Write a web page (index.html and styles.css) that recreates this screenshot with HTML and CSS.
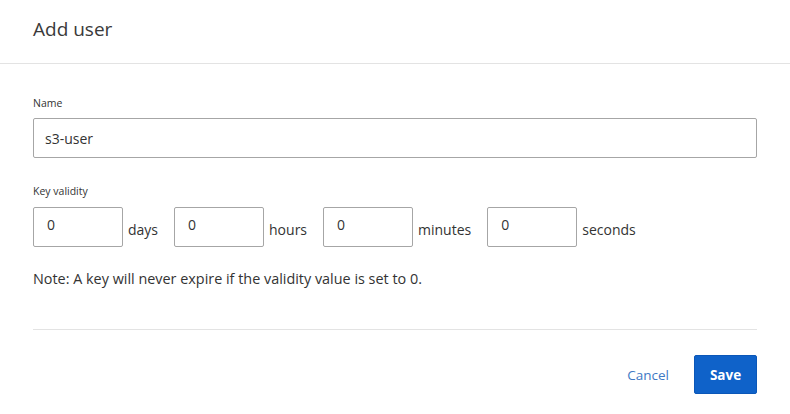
FILE: index.html
```html
<!DOCTYPE html>
<html lang="en">
<head>
<meta charset="utf-8">
<title>Add user</title>
<link rel="stylesheet" href="styles.css">
</head>
<body>
<div class="dialog">
  <header class="dialog-header">
    <h1 class="dialog-title">Add user</h1>
  </header>
  <main class="dialog-body">
    <div class="field">
      <label class="field-label" for="name">Name</label>
      <input class="text-input name-input" id="name" type="text" value="s3-user">
    </div>
    <div class="field field-validity">
      <div class="field-label">Key validity</div>
      <div class="validity-row">
        <input class="text-input num-input" type="text" value="0"><span class="unit">days</span>
        <input class="text-input num-input" type="text" value="0"><span class="unit">hours</span>
        <input class="text-input num-input" type="text" value="0"><span class="unit">minutes</span>
        <input class="text-input num-input" type="text" value="0"><span class="unit">seconds</span>
      </div>
    </div>
    <p class="note">Note: A key will never expire if the validity value is set to 0.</p>
  </main>
  <footer class="dialog-footer">
    <button class="btn btn-link" type="button">Cancel</button>
    <button class="btn btn-primary" type="button">Save</button>
  </footer>
</div>
</body>
</html>
```

FILE: styles.css
```css
* { box-sizing: border-box; }

html, body {
  margin: 0;
  padding: 0;
  background: #ffffff;
}

body {
  font-family: "Open Sans", "Noto Sans", "Liberation Sans", sans-serif;
  color: #333333;
}

.dialog {
  width: 790px;
  height: 414px;
  display: flex;
  flex-direction: column;
}

.dialog-header {
  height: 64px;
  border-bottom: 1px solid #e3e3e3;
  padding: 14px 33px 0;
}

.dialog-title {
  margin: 0;
  font-size: 19px;
  font-weight: 400;
  line-height: 30px;
  color: #3a3a3a;
}

.dialog-body {
  padding: 32px 33px 0;
}

.field {
  display: flex;
  flex-direction: column;
}

.field-label {
  font-size: 10.5px;
  line-height: 14px;
  color: #333333;
  margin-bottom: 8px;
}

.text-input {
  height: 40px;
  border: 1px solid #a6a6a6;
  border-radius: 2px;
  font-family: inherit;
  font-size: 14px;
  color: #333333;
  padding: 0 12px;
  background: #ffffff;
  outline: none;
}

.name-input {
  width: 724px;
  padding-left: 11px;
}

.field-validity {
  margin-top: 26px;
}

.field-validity .field-label {
  margin-bottom: 9px;
}

.validity-row {
  display: flex;
  align-items: center;
}

.num-input {
  width: 90px;
  padding: 0 0 5px 13px;
}

.unit {
  font-size: 14px;
  margin-left: 5px;
  margin-right: 16px;
  padding-top: 4px;
  color: #333333;
}

.note {
  margin: 22px 0 0;
  font-size: 14.4px;
  line-height: 20px;
  color: #333333;
}

.dialog-footer {
  margin: 40px 33px 0;
  border-top: 1px solid #e3e3e3;
  padding-top: 25px;
  display: flex;
  justify-content: flex-end;
  align-items: center;
}

.btn {
  font-family: inherit;
  font-size: 13.5px;
  border-radius: 2px;
  cursor: pointer;
}

.btn-link {
  background: none;
  border: none;
  color: #4079c4;
  padding: 0;
  margin-right: 25px;
  height: 39px;
}

.btn-primary {
  width: 63px;
  height: 39px;
  background: #0f62c9;
  border: 1px solid #0b57b8;
  color: #ffffff;
  font-weight: 700;
}
```
